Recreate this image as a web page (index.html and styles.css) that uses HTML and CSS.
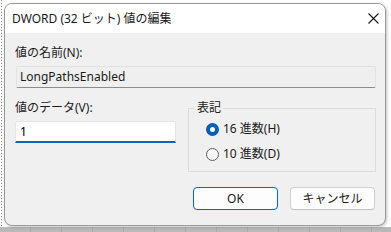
FILE: index.html
```html
<!DOCTYPE html>
<html lang="ja">

<head>
    <meta charset="UTF-8">
    <title>DWORD (32 ビット) 値の編集</title>
    <link rel="stylesheet" href="styles.css">
</head>

<body>
    <div class="dialog">
        <div class="titlebar">
            <span class="title">DWORD (32 ビット) 値の編集</span>
            <span class="close">
                <svg width="11" height="11" viewBox="0 0 11 11">
                    <path d="M0.5 0.5 L10.5 10.5 M10.5 0.5 L0.5 10.5" stroke="#1b1b1b" stroke-width="1.1" fill="none" />
                </svg>
            </span>
        </div>

        <div class="content">
            <div class="label">値の名前(N):</div>
            <div class="readonly">LongPathsEnabled</div>

            <div class="row">
                <div class="data">
                    <div class="label">値のデータ(V):</div>
                    <div class="edit">1</div>
                </div>
                <fieldset class="group">
                    <legend>表記</legend>
                    <div class="radio checked"><span class="dot"></span>16 進数(H)</div>
                    <div class="radio"><span class="dot"></span>10 進数(D)</div>
                </fieldset>
            </div>

            <div class="buttons">
                <div class="btn primary">OK</div>
                <div class="btn">キャンセル</div>
            </div>
        </div>
    </div>
</body>

</html>
```

FILE: styles.css
```css
* {
    margin: 0;
    padding: 0;
    box-sizing: border-box;
}

body {
    width: 391px;
    height: 232px;
    overflow: hidden;
    padding: 3px 0 0 4px;
    font-family: "Noto Sans", "Noto Sans CJK JP", sans-serif;
    font-size: 12px;
    color: #1b1b1b;
    background:
        linear-gradient(#ffffff, #ffffff) 0 0 / 100% 227px no-repeat,
        repeating-linear-gradient(90deg, #b9b9b9 0 30px, #a9a9a9 30px 31px) 0 227px / 100% 5px no-repeat,
        #b9b9b9;
}

body::before {
    content: "";
    position: absolute;
    left: 1px;
    top: 0;
    width: 1px;
    height: 227px;
    background: repeating-linear-gradient(#8a8a8a 0 1px, transparent 1px 3px);
}

.dialog {
    position: relative;
    width: 382px;
    height: 223px;
    background: #f0f0f0;
    border: 1px solid #9a9a9a;
    border-radius: 8px;
    overflow: hidden;
    box-shadow: 1px 1px 3px rgba(0, 0, 0, 0.25);
}

.titlebar {
    height: 29px;
    background: #ffffff;
    display: flex;
    align-items: center;
    justify-content: space-between;
    padding: 0 7px 0 7px;
}

.title {
    line-height: 16px;
    margin-top: 1px;
}

.close {
    width: 46px;
    height: 29px;
    display: flex;
    align-items: center;
    justify-content: center;
    margin-right: -18px;
}

.close svg {
    display: block;
}

.content {
    padding: 12px 9px 0 10px;
}

.label {
    line-height: 16px;
}

.readonly {
    margin-top: 5px;
    margin-left: 1px;
    height: 22px;
    line-height: 20px;
    padding-left: 3px;
    background: #efefef;
    border: 1px solid #e3e3e3;
    border-bottom-color: #8c8c8c;
    border-radius: 2px;
}

.row {
    display: grid;
    grid-template-columns: 161px 1fr;
    column-gap: 12px;
    margin-top: 12px;
}

.edit {
    margin-top: 5px;
    height: 22px;
    line-height: 20px;
    padding-left: 4px;
    background: #ffffff;
    border: 1px solid #e6e6e6;
    border-bottom: 2px solid #0067c0;
    border-radius: 2px 2px 0 0;
    color: #000;
}

.group {
    height: 72px;
    border: 1px solid #dcdcdc;
    padding: 5px 0 0 17px;
    min-width: 0;
}

.group legend {
    line-height: 16px;
    padding: 0 2px;
    margin-left: -11px;
}

.radio {
    display: flex;
    align-items: center;
    gap: 4px;
    line-height: 16px;
    margin-bottom: 9px;
}

.dot {
    width: 13px;
    height: 13px;
    border-radius: 50%;
    border: 1px solid #5e5e5e;
    background: #f7f7f7;
    flex: none;
}

.radio.checked .dot {
    border: 4px solid #005fb8;
    background: #ffffff;
}

.buttons {
    display: flex;
    justify-content: flex-end;
    gap: 12px;
    margin-top: 15px;
    padding-right: 1px;
}

.btn {
    width: 85px;
    height: 23px;
    line-height: 21px;
    text-align: center;
    background: #fdfdfd;
    border: 1px solid #d0d0d0;
    border-bottom-color: #c0c0c0;
    border-radius: 4px;
}

.btn.primary {
    border: 1px solid #0067c0;
}
```
